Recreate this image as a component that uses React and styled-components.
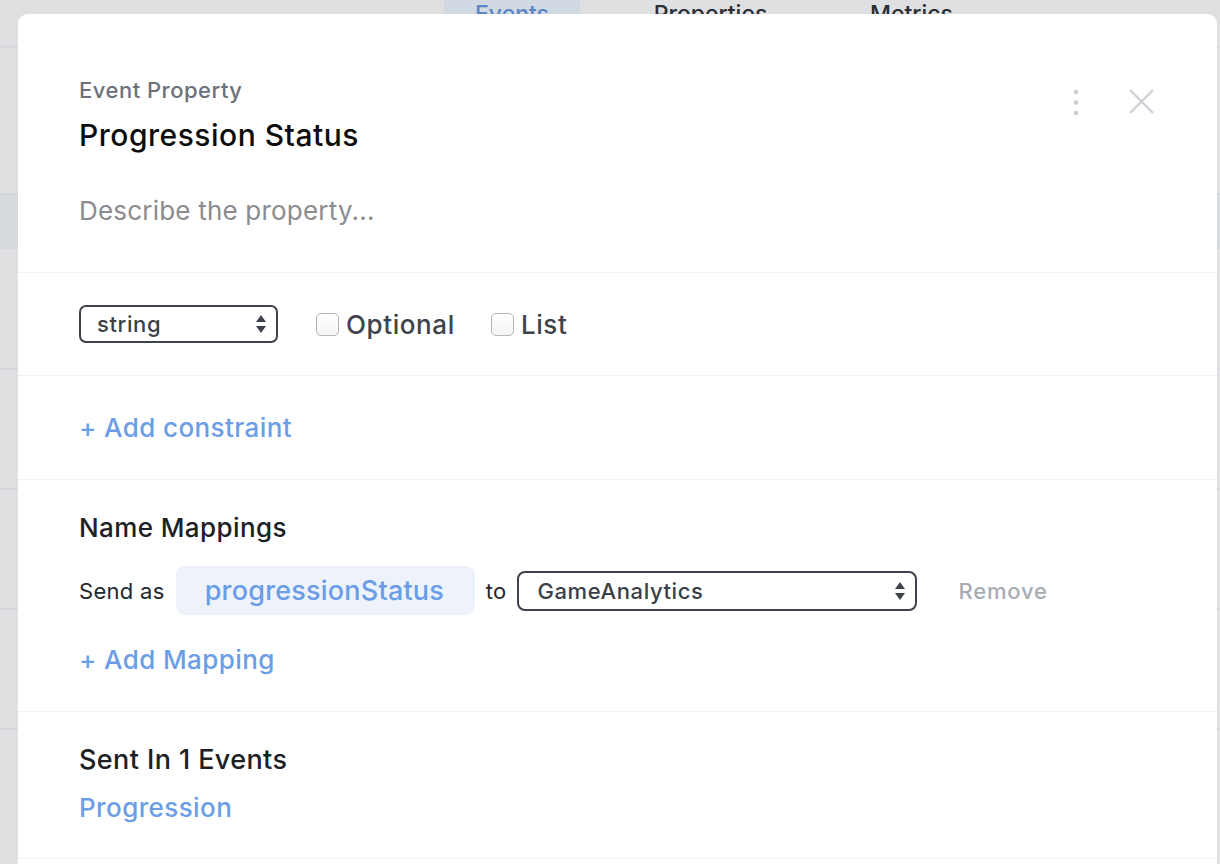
import React from 'react'
import styled, { createGlobalStyle } from 'styled-components'

const GlobalStyle = createGlobalStyle`
  html, body {
    margin: 0;
    padding: 0;
    background: #dfe0e2;
    font-family: Inter, "Noto Sans", "Liberation Sans", sans-serif;
    -webkit-font-smoothing: antialiased;
  }
`

const Page = styled.div`
  position: relative;
  width: 1220px;
  height: 864px;
  overflow: hidden;
  background: #dfe0e2;
`

// the page behind the overlay
const TabBar = styled.div`
  height: 46px;
  border-bottom: 2px solid #d6d8dc;
  display: flex;
  padding-left: 444px;
`

const Tab = styled.div`
  width: ${props => props.width}px;
  text-align: center;
  font-size: 23px;
  font-weight: 500;
  line-height: 28px;
  color: ${props => props.active ? '#5a86c6' : '#2b2e33'};
  background: ${props => props.active ? '#d1d9e3' : 'transparent'};
  margin-right: ${props => props.gap || 0}px;
`

const BackRow = styled.div`
  height: ${props => props.height}px;
  border-bottom: 2px solid #d5d7db;
  background: ${props => props.highlight ? '#d7dade' : 'transparent'};
`

const Modal = styled.div`
  position: absolute;
  left: 18px;
  top: 14px;
  width: 1199px;
  bottom: -40px;
  background: #fff;
  border-radius: 10px 10px 0 0;
`

const Section = styled.div`
  padding: ${props => props.pad || '0'} 61px;
  border-bottom: 1px solid #f1f2f6;
`

const Header = styled(Section)`
  display: flex;
  justify-content: space-between;
  align-items: flex-start;
  padding-right: 63px;
`

const TitleBlock = styled.div`
  display: flex;
  flex-direction: column;
`

const Kind = styled.div`
  font-size: 22px;
  line-height: 24px;
  font-weight: 500;
  letter-spacing: 0.5px;
  color: #6c717b;
`

const Title = styled.div`
  margin-top: 16px;
  font-size: 30px;
  line-height: 34px;
  font-weight: 500;
  letter-spacing: 0.5px;
  color: #0b0c0e;
`

const Description = styled.div`
  margin-top: 42px;
  font-size: 26px;
  line-height: 34px;
  letter-spacing: 0.2px;
  color: #8b8c8f;
`

const Actions = styled.div`
  display: flex;
  align-items: flex-start;
  gap: 50px;
  margin-top: 11px;
`

const Row = styled.div`
  display: flex;
  align-items: center;
`

const SelectBox = styled.div`
  box-sizing: border-box;
  width: ${props => props.width}px;
  height: ${props => props.height}px;
  border: 2px solid #3e434b;
  border-radius: ${props => props.radius || 7}px;
  display: flex;
  align-items: center;
  justify-content: space-between;
  padding: 0 9px 0 ${props => props.padLeft || 16}px;
  font-size: 22px;
  font-weight: 500;
  letter-spacing: 0.6px;
  color: #3b3f46;
`

const CheckLabel = styled.label`
  display: flex;
  align-items: center;
  gap: 7px;
  margin-left: ${props => props.offset}px;
  font-size: 26px;
  font-weight: 500;
  letter-spacing: 0.6px;
  color: #3f434b;
`

const Box = styled.span`
  box-sizing: border-box;
  width: 23px;
  height: 23px;
  border: 1px solid #b4b6ba;
  border-radius: 5px;
  background: linear-gradient(#ffffff, #f4f4f4);
`

const LinkText = styled.div`
  font-size: 26px;
  line-height: 34px;
  font-weight: 500;
  letter-spacing: 0.4px;
  color: #6b9ee6;
  margin-top: ${props => props.top || 0}px;
`

const Heading = styled.div`
  font-size: ${props => props.size || 26}px;
  line-height: 30px;
  font-weight: 500;
  letter-spacing: 0.4px;
  color: #1d2025;
`

const Plain = styled.span`
  font-size: 22px;
  letter-spacing: 0.3px;
  color: #24272b;
  margin-right: ${props => props.gap}px;
`

const Chip = styled.div`
  box-sizing: border-box;
  width: 299px;
  height: 49px;
  border-radius: 9px;
  background: #eef3fb;
  padding-left: 29px;
  display: flex;
  align-items: center;
  font-size: 27px;
  font-weight: 500;
  letter-spacing: 0.2px;
  color: #6a9de6;
  margin-right: 11px;
`

const Remove = styled.span`
  margin-left: 41px;
  font-size: 22px;
  font-weight: 500;
  letter-spacing: 0.8px;
  color: #a7acb4;
`

const MappingRow = styled(Row)`
  margin-top: 23px;
`

const Arrows = () => (
  <svg width="12" height="20" viewBox="0 0 12 20">
    <path d="M6 1 L11 8 L1 8 Z" fill="#3e434b" />
    <path d="M6 19 L11 12 L1 12 Z" fill="#3e434b" />
  </svg>
)

const Dots = () => (
  <svg width="6" height="28" viewBox="0 0 6 28">
    <circle cx="3" cy="3" r="2.3" fill="#c9ccd3" />
    <circle cx="3" cy="13.5" r="2.3" fill="#c9ccd3" />
    <circle cx="3" cy="24" r="2.3" fill="#c9ccd3" />
  </svg>
)

const Close = () => (
  <svg width="25" height="25" viewBox="0 0 25 25">
    <path d="M1 1 L24 24 M24 1 L1 24" stroke="#c9ccd3" strokeWidth="2" />
  </svg>
)

export default function App() {
  return (
    <Page>
      <GlobalStyle />
      <TabBar>
        <Tab active width={136} gap={72}>Events</Tab>
        <Tab width={117} gap={101}>Properties</Tab>
        <Tab width={83}>Metrics</Tab>
      </TabBar>
      <BackRow height={145} />
      <BackRow height={52} highlight />
      <BackRow height={119} />
      <BackRow height={118} />
      <BackRow height={118} />
      <BackRow height={118} />

      <Modal>
        <Header pad="64px 0 44px">
          <TitleBlock>
            <Kind>Event Property</Kind>
            <Title>Progression Status</Title>
            <Description>Describe the property...</Description>
          </TitleBlock>
          <Actions>
            <Dots />
            <Close />
          </Actions>
        </Header>

        <Section pad="32px">
          <Row>
            <SelectBox width={199} height={38}>
              string
              <Arrows />
            </SelectBox>
            <CheckLabel offset={38}><Box />Optional</CheckLabel>
            <CheckLabel offset={36}><Box />List</CheckLabel>
          </Row>
        </Section>

        <Section pad="35px 61px 34px">
          <LinkText>+ Add constraint</LinkText>
        </Section>

        <Section pad="33px 61px 34px">
          <Heading>Name Mappings</Heading>
          <MappingRow>
            <Plain gap={11}>Send as</Plain>
            <Chip>progressionStatus</Chip>
            <Plain gap={11}>to</Plain>
            <SelectBox width={400} height={40} radius={8} padLeft={18}>
              GameAnalytics
              <Arrows />
            </SelectBox>
            <Remove>Remove</Remove>
          </MappingRow>
          <LinkText top={28}>+ Add Mapping</LinkText>
        </Section>

        <Section pad="33px 61px 33px">
          <Heading size={27}>Sent In 1 Events</Heading>
          <LinkText top={16}>Progression</LinkText>
        </Section>
      </Modal>
    </Page>
  )
}
